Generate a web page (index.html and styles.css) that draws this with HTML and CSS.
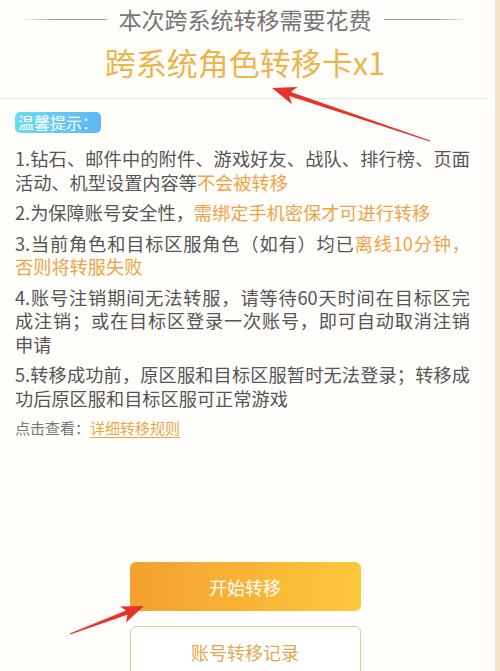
FILE: index.html
```html
<!DOCTYPE html>
<html lang="zh">
<head>
<meta charset="utf-8">
<link rel="stylesheet" href="styles.css">
</head>
<body>
<div class="card">
  <div class="head">
    <span class="rule rule-l"></span>
    <span class="head-text">本次跨系统转移需要花费</span>
    <span class="rule rule-r"></span>
  </div>
  <div class="title">跨系统角色转移卡x1</div>
  <div class="divider"></div>
  <div class="tips">
    <span class="badge">温馨提示：</span>
    <p class="item"><span class="ln full">1.钻石、邮件中的附件、游戏好友、战队、排行榜、页面</span><span class="ln">活动、机型设置内容等<span class="hl">不会被转移</span></span></p>
    <p class="item"><span class="ln">2.为保障账号安全性，<span class="hl">需绑定手机密保才可进行转移</span></span></p>
    <p class="item"><span class="ln full">3.当前角色和目标区服角色（如有）均已<span class="hl">离线10分钟，</span></span><span class="ln hl">否则将转服失败</span></p>
    <p class="item"><span class="ln full">4.账号注销期间无法转服，请等待60天时间在目标区完</span><span class="ln full">成注销；或在目标区登录一次账号，即可自动取消注销</span><span class="ln">申请</span></p>
    <p class="item"><span class="ln full">5.转移成功前，原区服和目标区服暂时无法登录；转移成</span><span class="ln">功后原区服和目标区服可正常游戏</span></p>
    <p class="more">点击查看：<span class="link">详细转移规则</span></p>
  </div>
  <div class="actions">
    <div class="btn btn-main">开始转移</div>
    <div class="btn btn-ghost">账号转移记录</div>
  </div>
  <svg class="marks" width="495" height="671" viewBox="0 0 495 671">
    <polygon points="272,88 297.6,87.1 290.7,91.9 430.2,140.4 429.8,141.6 289.3,96.1 291.9,104.2" fill="#e8322b"/>
    <polygon points="144,606 120,606.5 126,610.6 69.8,633.4 70.2,634.6 127.4,614.8 126,622.5" fill="#e8322b"/>
  </svg>
</div>
</body>
</html>
```

FILE: styles.css
```css
html, body {
  margin: 0;
  padding: 0;
}
body {
  background: #f5e5c6;
  font-family: "Noto Sans CJK SC", "Noto Sans", sans-serif;
  width: 500px;
  height: 671px;
  overflow: hidden;
}
.card {
  position: relative;
  width: 495px;
  height: 671px;
  background: #fffefb;
  overflow: hidden;
}
.head {
  width: 490px;
  height: 38px;
  display: flex;
  align-items: center;
  justify-content: center;
  gap: 12px;
}
.head-text {
  font-size: 23px;
  line-height: 38px;
  color: #767676;
}
.rule {
  width: 86px;
  height: 1px;
}
.rule-l {
  background: linear-gradient(to right, rgba(150,150,150,0), #9a9a9a 40%);
}
.rule-r {
  background: linear-gradient(to left, rgba(150,150,150,0), #9a9a9a 40%);
}
.title {
  width: 490px;
  text-align: center;
  font-size: 31px;
  line-height: 48px;
  color: #ecb54c;
}
.divider {
  margin-top: 12px;
  width: 488px;
  height: 1px;
  background: #e4e4e4;
}
.tips {
  padding: 11px 25px 0 15px;
}
.badge {
  display: inline-block;
  font-size: 16px;
  line-height: 21px;
  padding: 0 3px;
  color: #ffffff;
  border-radius: 5px;
  background: linear-gradient(to right, #6cdcee, #5fb8f4);
}
.item {
  margin: 7px 0 0;
  font-size: 18.2px;
  line-height: 23.5px;
  color: #555555;
}
.ln {
  display: block;
}
.full {
  text-align: justify;
  text-align-last: justify;
}
.tips .item:first-of-type {
  margin-top: 13px;
}
.hl {
  color: #eda346;
}
.more {
  margin: 8px 0 0;
  font-size: 15px;
  line-height: 20px;
  color: #777777;
}
.link {
  color: #e8a848;
  text-decoration: underline;
  text-underline-offset: 3px;
}
.actions {
  margin-top: 124px;
  width: 490px;
  display: flex;
  flex-direction: column;
  align-items: center;
  gap: 15px;
}
.btn {
  box-sizing: border-box;
  width: 231px;
  height: 49px;
  border-radius: 6px;
  display: flex;
  align-items: center;
  justify-content: center;
  font-size: 18px;
}
.btn-main {
  color: #ffffff;
  background: linear-gradient(to right, #f4a02e, #fcc83c);
}
.btn-ghost {
  height: 51px;
  color: #e2a955;
  border: 1.5px solid #ebc789;
  background: #ffffff;
}
.marks {
  position: absolute;
  left: 0;
  top: 0;
  pointer-events: none;
}
```
